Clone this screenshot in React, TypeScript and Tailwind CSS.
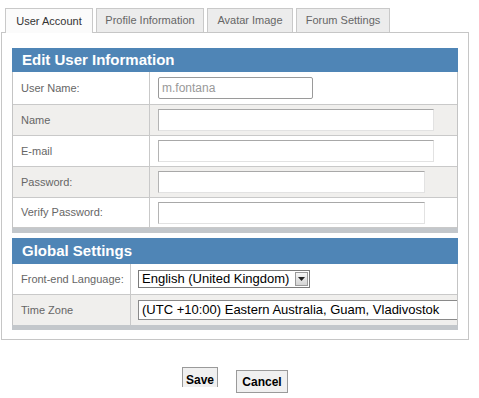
import React from "react"

const tabs = [
  { label: "User Account", w: "w-[88px]", active: true },
  { label: "Profile Information", w: "w-[108px]", active: false },
  { label: "Avatar Image", w: "w-[86px]", active: false },
  { label: "Forum Settings", w: "w-[94px]", active: false }
]

const accountRows = [
  { label: "User Name:", input: "w-[155px]", value: "m.fontana", shaded: false, h: "h-[33px]" },
  { label: "Name", input: "w-[276px]", value: "", shaded: true, h: "h-[31px]" },
  { label: "E-mail", input: "w-[276px]", value: "", shaded: false, h: "h-[31px]" },
  { label: "Password:", input: "w-[267px]", value: "", shaded: true, h: "h-[31px]" },
  { label: "Verify Password:", input: "w-[267px]", value: "", shaded: false, h: "h-[30px]" }
]

const SectionHeader = ({ title, className }: { title: string; className: string }) => (
  <div
    className={`flex items-center bg-[#4f85b6] pl-[10px] text-[15px] font-bold text-white ${className}`}
  >
    {title}
  </div>
)

const DropArrow = () => (
  <div className="flex h-[14px] w-[13px] items-center justify-center border border-[#9a9a9a] bg-gradient-to-b from-[#f6f6f6] to-[#d4d4d4]">
    <svg width="7" height="4" viewBox="0 0 7 4">
      <path d="M0 0h7L3.5 4z" fill="#222" />
    </svg>
  </div>
)

export default function App() {
  return (
    <div
      className="h-[398px] w-[479px] bg-white pt-[8px]"
      style={{ fontFamily: '"Liberation Sans", Arial, sans-serif' }}
    >
      {/* tabs */}
      <div className="ml-[5px] flex h-[24px] items-start gap-[3px]">
        {tabs.map((t) => (
          <div
            key={t.label}
            className={`${t.w} relative z-10 flex items-center justify-center border border-[#c9c9c9] text-[11px] ${
              t.active
                ? "h-[25px] border-b-0 bg-[#fbfbfb] text-[#333]"
                : "h-[24px] border-b-0 bg-[#ececec] text-[#666]"
            }`}
          >
            {t.label}
          </div>
        ))}
      </div>

      {/* panel */}
      <div className="ml-[1px] h-[308px] w-[468px] border border-[#c6c6c6] bg-white pl-[10px] pt-[15px]">
        <div className="w-[446px]">
          <SectionHeader title="Edit User Information" className="h-[24px]" />
          <div className="border-l border-r border-[#c4c4c4]">
            {accountRows.map((r) => (
              <div
                key={r.label}
                className={`flex ${r.h} border-b border-[#c9c9c9] ${r.shaded ? "bg-[#f0efed]" : "bg-white"}`}
              >
                <div className="flex w-[137px] items-center border-r border-[#c9c9c9] pl-[8px] text-[11px] text-[#666]">
                  {r.label}
                </div>
                <div className="flex flex-1 items-center pl-[8px]">
                  <div
                    className={`${r.input} flex h-[22px] items-center border bg-white px-[3px] text-[12px] text-[#999] ${
                      r.value
                        ? "rounded-[2px] border-[#9a9a9a]"
                        : "border-t-[#a8a8a8] border-l-[#b4b4b4] border-r-[#e2e2e2] border-b-[#e2e2e2]"
                    }`}
                  >
                    {r.value}
                  </div>
                </div>
              </div>
            ))}
          </div>
          <div className="h-[5px] bg-[#c3c7cb]" />

          <SectionHeader title="Global Settings" className="mt-[5px] h-[26px]" />
          <div className="border-l border-r border-[#c4c4c4]">
            <div className="flex h-[31px] border-b border-[#c9c9c9] bg-white">
              <div className="flex w-[118px] items-center border-r border-[#c9c9c9] pl-[8px] text-[11px] text-[#666]">
                Front-end Language:
              </div>
              <div className="flex flex-1 items-center pl-[7px]">
                <div className="flex h-[18px] w-[172px] items-center justify-between border border-[#7b7b7b] bg-white pl-[3px] pr-[1px] text-[13px] text-black">
                  <span>English (United Kingdom)</span>
                  <DropArrow />
                </div>
              </div>
            </div>
            <div className="flex h-[30px] bg-[#f0efed]">
              <div className="flex w-[118px] items-center border-r border-[#c9c9c9] pl-[8px] text-[11px] text-[#666]">
                Time Zone
              </div>
              <div className="flex flex-1 items-center overflow-hidden pl-[7px]">
                <div className="flex h-[20px] w-[360px] shrink-0 items-center border border-[#8a8a8a] bg-white pl-[3px] text-[13px] text-black whitespace-nowrap">
                  (UTC +10:00) Eastern Australia, Guam, Vladivostok
                </div>
              </div>
            </div>
          </div>
          <div className="h-[5px] bg-[#c3c7cb]" />
        </div>
      </div>

      {/* buttons */}
      <div className="ml-[1px] mt-[27px] flex w-[468px] items-start justify-center gap-[18px]">
        <button className="flex h-[20px] w-[36px] items-end justify-center overflow-hidden border border-b-0 border-[#9a9a9a] bg-[#f0f0f0] text-[12px] font-bold leading-[14px] text-black">
          Save
        </button>
        <button className="mt-[3px] flex h-[23px] w-[52px] items-center justify-center border border-[#9a9a9a] bg-[#f0f0f0] text-[12px] font-bold text-black">
          Cancel
        </button>
      </div>
    </div>
  )
}
